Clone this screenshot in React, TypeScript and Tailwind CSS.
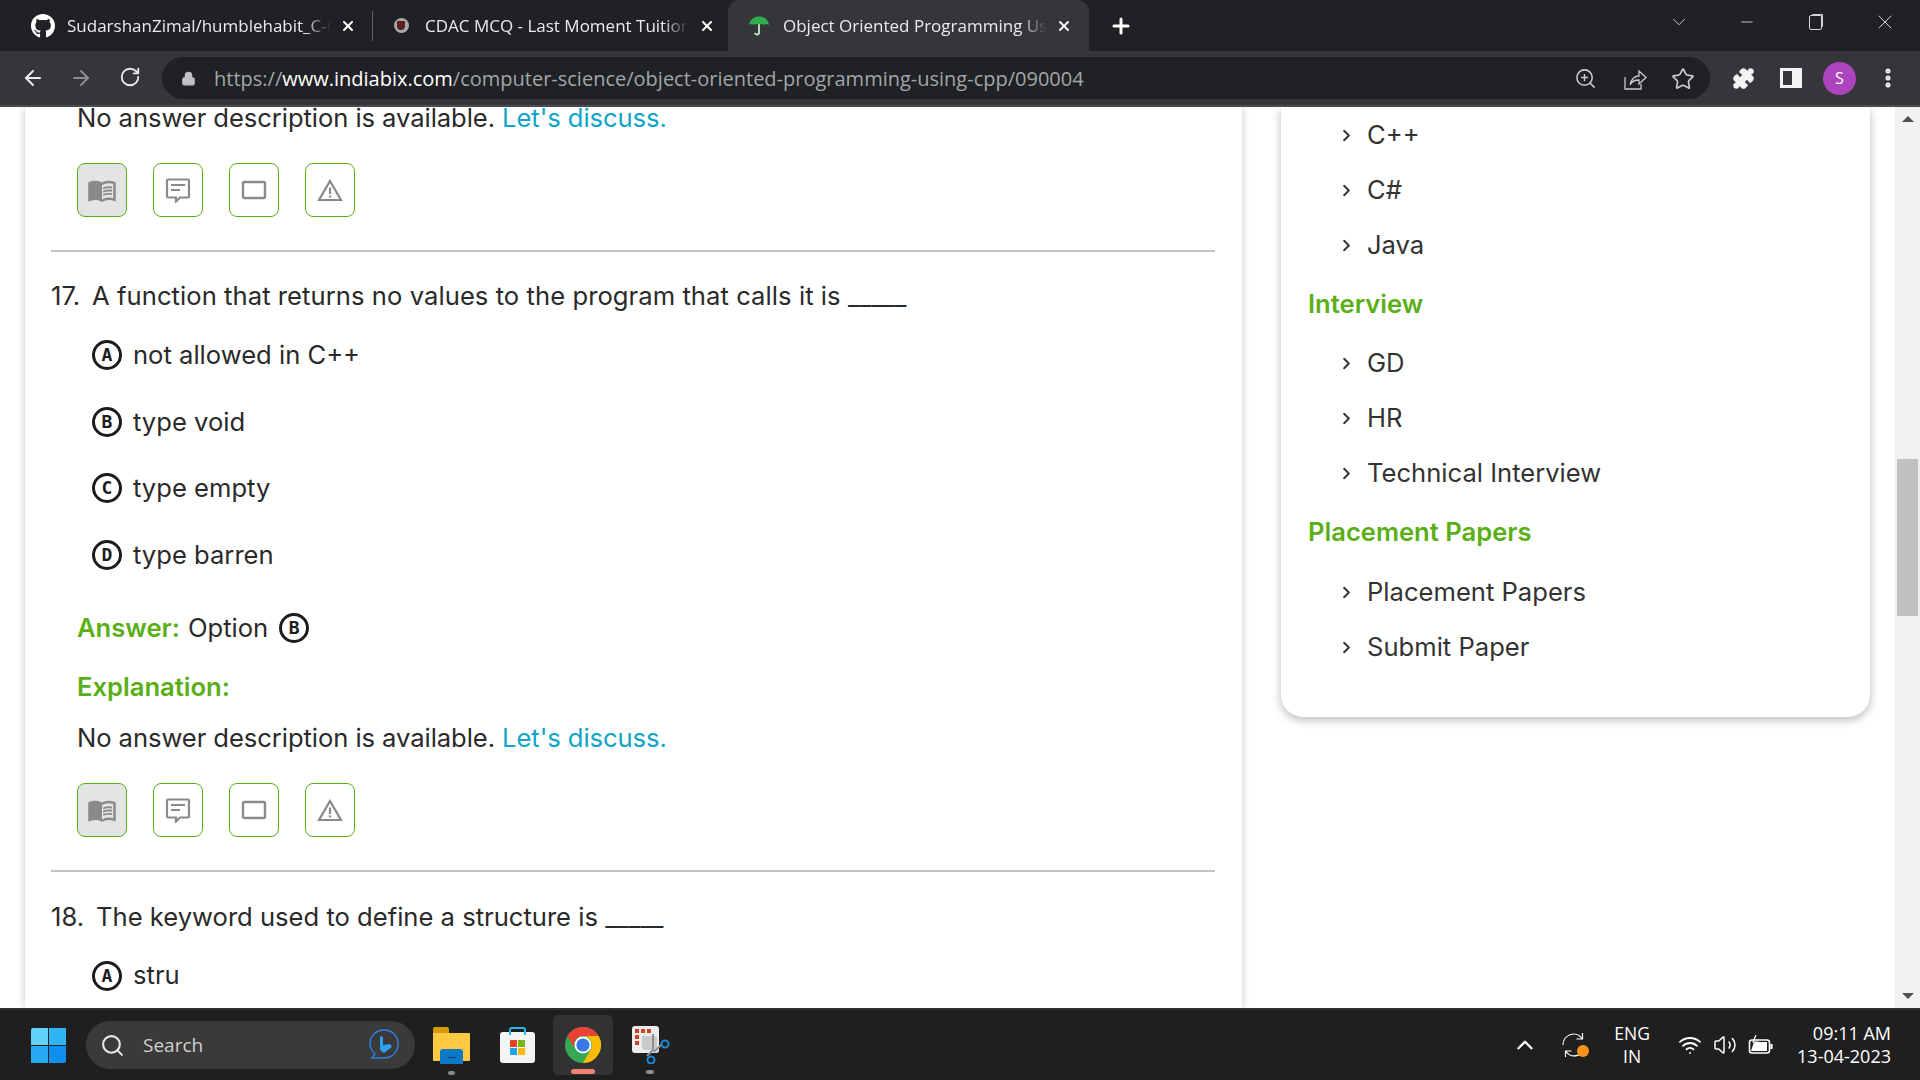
import * as React from 'react';
import { ArrowLeft, ArrowRight, RotateCw, Lock, ZoomIn, Star, Puzzle, X, Plus, ChevronDown, Minus, ChevronRight, ChevronUp, Search, Wifi, Volume2, EllipsisVertical } from 'lucide-react';
import { FaGithub } from 'react-icons/fa';
import { MdMenuBook } from 'react-icons/md';

const GREEN = 'text-[#5aaf17]';

function Letter({ children }: { children: string }) {
  return (
    <span className="w-[30px] h-[30px] shrink-0 rounded-full border-[3px] border-[#1c1c1c] flex items-center justify-center text-[18px] font-bold text-[#1c1c1c] leading-none font-['DejaVu_Sans_Mono',monospace]">
      {children}
    </span>
  );
}

function Option({ letter, text }: { letter: string; text: string }) {
  return (
    <div className="h-[66.6px] pl-[41px] flex items-center gap-[11px]">
      <Letter>{letter}</Letter>
      <span>{text}</span>
    </div>
  );
}

function ActionButtons() {
  const box = 'w-[50px] h-[54px] rounded-[8px] border border-[#5aaf17] flex items-center justify-center text-[#8a8a8a]';
  return (
    <div className="flex gap-[26px] ml-[26px]">
      <div className={box + ' bg-[#e4e4e4]'}>
        <MdMenuBook size={30} />
      </div>
      <div className={box}>
        <svg width="26" height="26" viewBox="0 0 26 26" fill="none" stroke="currentColor" strokeWidth="2.2">
          <path d="M3 2.5h20a1 1 0 0 1 1 1v16a1 1 0 0 1-1 1h-8l-4 4v-4H3a1 1 0 0 1-1-1v-16a1 1 0 0 1 1-1z" />
          <path d="M6 8h14M6 13h9" />
        </svg>
      </div>
      <div className={box}>
        <svg width="26" height="22" viewBox="0 0 26 22" fill="none" stroke="currentColor" strokeWidth="2.4">
          <rect x="2" y="3" width="22" height="16" rx="1.5" />
        </svg>
      </div>
      <div className={box}>
        <svg width="26" height="24" viewBox="0 0 26 24" fill="none" stroke="currentColor" strokeWidth="2.2">
          <path d="M13 3 24 22H2z" strokeLinejoin="miter" />
          <path d="M13 9.5v6.5M13 17.5v2" />
        </svg>
      </div>
    </div>
  );
}

function SideItem({ text }: { text: string }) {
  return (
    <div className="h-[55px] flex items-center pl-[29px] text-[#333]">
      <ChevronRight size={19} strokeWidth={2.4} className="shrink-0 text-[#333]" />
      <span className="ml-[11px]">{text}</span>
    </div>
  );
}

function SideHeading({ text, className }: { text: string; className: string }) {
  return <div className={'h-10 flex items-center font-semibold ' + GREEN + ' ' + className}>{text}</div>;
}

function Tab({ icon, title, closeClass, active }: { icon: React.ReactNode; title: string; closeClass: string; active?: boolean }) {
  return (
    <div className={'h-full flex items-center relative ' + (active ? 'w-[361px] bg-[#35363a] rounded-t-[12px]' : 'w-[358px]')}>
      <div className="w-[24px] ml-[19px] flex justify-center shrink-0">{icon}</div>
      <div className="ml-[12px] w-[264px] overflow-hidden whitespace-nowrap text-[17px] text-[#e8eaed] [mask-image:linear-gradient(to_right,black_90%,transparent)]">
        {title}
      </div>
      <X size={16} strokeWidth={3} className={'text-white absolute ' + closeClass} />
    </div>
  );
}

function Chrome() {
  return (
    <div className="h-[107px] shrink-0 font-['Open_Sans',sans-serif]">
      <div className="h-[51px] bg-[#202124] flex pl-[12px]">
        <div className="flex relative">
          <Tab icon={<FaGithub size={26} className="text-white" />} title="SudarshanZimal/humblehabit_C-C" closeClass="left-[328px]" />
          <div className="absolute left-[360px] top-[11px] w-px h-[30px] bg-[#5f6368]" />
          <Tab
            icon={
              <span className="w-[15px] h-[15px] rounded-full bg-[#a8a8a8] flex items-center justify-center">
                <span className="w-[8px] h-[9px] bg-[#5b2020] rounded-b-[4px]" />
              </span>
            }
            title="CDAC MCQ - Last Moment Tuition"
            closeClass="left-[329px]"
          />
          <Tab
            icon={
              <svg width="22" height="22" viewBox="0 0 24 24">
                <path d="M1 11C2 4 8 1.5 12 1.5S22 4 23 11c-2-1.5-4-1.5-5.5 0-1.500-1.500-3.500-1.500-5.500 0-2-1.500-4-1.500-5.500 0C5 9.500 3 9.500 1 11z" fill="#2fae4e" />
                <path d="M12 10v9c0 3-4 3-4.500 0.500" fill="none" stroke="#bfe8c8" strokeWidth="2" />
              </svg>
            }
            title="Object Oriented Programming Using"
            closeClass="left-[328px]"
            active
          />
          <Plus size={24} strokeWidth={3} className="text-white self-center ml-[20px]" />
        </div>
        <div className="ml-auto flex items-start text-[#d5d5d5]">
          <div className="w-[68px] h-[44px] flex items-center justify-center"><ChevronDown size={22} strokeWidth={1} /></div>
          <div className="w-[68px] h-[44px] flex items-center justify-center"><Minus size={18} strokeWidth={1.2} /></div>
          <div className="w-[68px] h-[44px] flex items-center justify-center">
            <span className="w-[13px] h-[15px] border border-[#d5d5d5] rounded-[2px] shadow-[2px_-2px_0_-1px_#d5d5d5]" />
          </div>
          <div className="w-[71px] h-[44px] flex items-center justify-center"><X size={24} strokeWidth={1} /></div>
        </div>
      </div>
      <div className="h-[54px] bg-[#35363a] flex items-center">
        <div className="w-[162px] flex shrink-0 text-[#e8eaed]">
          <ArrowLeft size={24} className="ml-[21px]" />
          <ArrowRight size={24} className="ml-[24px] text-[#8a8c90]" />
          <RotateCw size={22} className="ml-[26px]" />
        </div>
        <div className="w-[1548px] h-[42px] bg-[#202124] rounded-full flex items-center text-[20px] text-[#a2a5aa] pt-px">
          <Lock size={15} fill="#bdc1c6" strokeWidth={2} className="ml-[19px] text-[#bdc1c6]" />
          <span className="ml-[18px]">https://<span className="text-white">www.indiabix.com</span>/computer-science/object-oriented-programming-using-cpp/090004</span>
          <ZoomIn size={23} strokeWidth={1.6} className="ml-auto text-[#c8cacd]" />
          <svg width="24" height="24" viewBox="0 0 24 24" fill="none" stroke="#c8cacd" strokeWidth="1.3" className="ml-[26px]">
            <path d="M2 10v12h16v-5M7 18c1-6 5-9 9-9V4l7 6.500-7 6.500v-4c-4 0-7 1-9 5z" />
          </svg>
          <Star size={24} strokeWidth={1.7} className="ml-[24px] mr-[15px] text-[#c8cacd]" />
        </div>
        <Puzzle size={23} fill="#f1f3f4" strokeWidth={1.5} className="ml-[22px] text-[#f1f3f4]" />
        <div className="ml-[25px] w-[22px] h-[20px] border-[3px] border-r-[10px] border-[#f1f3f4]" />
        <div className="ml-[21px] w-[33px] h-[33px] rounded-full bg-[#ad44bd] text-white text-[16px] flex items-center justify-center">S</div>
        <EllipsisVertical size={24} strokeWidth={3} className="ml-[20px] text-[#f1f3f4]" />
      </div>
      <div className="h-[2px] bg-[#4a4b4f]" />
    </div>
  );
}

function Page() {
  return (
    <div className="flex-1 min-h-0 flex overflow-hidden bg-white font-['Inter',sans-serif] text-[25.6px] text-[#2a2a2a]">
      {/* question column */}
      <div className="w-[1217px] ml-[25px] shrink-0 shadow-[0_0_8px_rgba(0,0,0,0.22)] pl-[26px] pr-[27px]">
        <div className="h-[22px] ml-[26px] flex items-center whitespace-nowrap tracking-[-0.07px]">
          No answer description is available.&nbsp;<span className="text-[#0ea5c9]">Let's discuss.</span>
        </div>
        <div className="mt-[34px]"><ActionButtons /></div>
        <div className="mt-[33px] h-[2px] bg-[#c4c4c4]" />
        <div className="mt-[24px] h-10 flex items-center">
          <span className="w-[41px] shrink-0">17.</span>
          <span className="tracking-[0.06px]">A function that returns no values to the program that calls it is _____</span>
        </div>
        <div className="mt-[6px]">
          <Option letter="A" text="not allowed in C++" />
          <Option letter="B" text="type void" />
          <Option letter="C" text="type empty" />
          <Option letter="D" text="type barren" />
        </div>
        <div className="mt-[20px] h-10 ml-[26px] flex items-center">
          <span className={'font-semibold ' + GREEN}>Answer:</span>
          <span className="ml-[8px]">Option</span>
          <span className="ml-[11px]"><Letter>B</Letter></span>
        </div>
        <div className={'mt-[19px] h-10 ml-[26px] flex items-center font-semibold ' + GREEN}>Explanation:</div>
        <div className="mt-[11px] h-10 ml-[26px] flex items-center whitespace-nowrap tracking-[-0.07px]">
          No answer description is available.&nbsp;<span className="text-[#0ea5c9]">Let's discuss.</span>
        </div>
        <div className="mt-[25px]"><ActionButtons /></div>
        <div className="mt-[33px] h-[2px] bg-[#c4c4c4]" />
        <div className="mt-[25px] h-10 flex items-center">
          <span className="w-[45px] shrink-0">18.</span>
          <span>The keyword used to define a structure is _____</span>
        </div>
        <div className="mt-[5px]"><Option letter="A" text="stru" /></div>
      </div>

      {/* sidebar */}
      <div className="w-[589px] ml-[39px] shrink-0 self-start bg-white rounded-b-[22px] shadow-[0_3px_10px_rgba(0,0,0,0.28)] pl-[27px] pt-px pb-[42px]">
        <SideItem text="C++" />
        <SideItem text="C#" />
        <SideItem text="Java" />
        <SideHeading text="Interview" className="mt-[11px] mb-[12px]" />
        <SideItem text="GD" />
        <SideItem text="HR" />
        <SideItem text="Technical Interview" />
        <SideHeading text="Placement Papers" className="mt-[11px] mb-[13px]" />
        <SideItem text="Placement Papers" />
        <SideItem text="Submit Paper" />
      </div>

      {/* scrollbar */}
      <div className="ml-auto w-[25px] bg-[#f1f1f1] flex flex-col items-center py-[9px]">
        <span className="w-0 h-0 border-x-[6px] border-x-transparent border-b-[6px] border-b-[#505050]" />
        <span className="mt-[337px] w-[21px] h-[157px] bg-[#c1c1c1]" />
        <span className="mt-auto w-0 h-0 border-x-[6px] border-x-transparent border-t-[6px] border-t-[#505050]" />
      </div>
    </div>
  );
}

function Taskbar() {
  return (
    <div className="h-[72px] shrink-0 bg-[#1f1f1f] border-t-2 border-[#2e2e2e] flex items-center text-white font-['Open_Sans',sans-serif]">
      <div className="ml-[31px] w-[35px] h-[35px] grid grid-cols-2 gap-[1px] shrink-0">
        <span className="bg-[#5fd3fb] rounded-tl-[2px]" />
        <span className="bg-[#2fb5f5]" />
        <span className="bg-[#26a8f3]" />
        <span className="bg-[#0f8ff0] rounded-br-[2px]" />
      </div>
      <div className="ml-[20px] w-[329px] h-[48px] rounded-full bg-[#3a3a3a] flex items-center text-[#d0d0d0] text-[19px] shrink-0">
        <Search size={25} strokeWidth={2} className="ml-[14px] text-[#e8e8e8]" />
        <span className="ml-[18px]">Search</span>
        <svg width="30" height="32" viewBox="0 0 30 32" fill="none" className="ml-auto mr-[16px]">
          <path d="M3 29l3-4C3 22 1 19 1 15 1 7 7 1 15 1s14 6 14 14-6 14-14 14z" stroke="#2f7fe0" strokeWidth="1.4" />
          <path d="M11 7l3 1v8l7-1 2 3-8 6-4-3z" fill="#2ea0f0" />
        </svg>
      </div>

      <div className="ml-[18px] w-[37px] h-[37px] relative shrink-0">
        <span className="block w-[16px] h-[8px] bg-[#d99a0a] rounded-t-[2px]" />
        <span className="block w-[37px] h-[28px] -mt-[2px] bg-[#fdc940] rounded-[1px]" />
        <span className="absolute left-[7px] bottom-0 w-[23px] h-[15px] bg-[#0c78c8] rounded-t-[3px]" />
        <span className="absolute left-[15px] top-[30px] w-[8px] h-px bg-[#063f6e]" />
        <span className="absolute left-[15px] top-[44px] w-[7px] h-[4px] rounded-full bg-[#8a8a8a]" />
      </div>

      <div className="ml-[30px] w-[35px] h-[31px] relative shrink-0 bg-[#f4f4f4] rounded-[3px] mt-[5px]">
        <span className="absolute left-[9px] -top-[5px] w-[17px] h-[8px] border-2 border-b-0 border-[#29b6e8] rounded-t-[3px]" />
        <div className="absolute left-[10px] top-[8px] w-[15px] h-[15px] grid grid-cols-2 gap-px">
          <span className="bg-[#e8431f]" />
          <span className="bg-[#7cb518]" />
          <span className="bg-[#1fa2e8]" />
          <span className="bg-[#fbb90a]" />
        </div>
      </div>

      <div className="ml-[18px] w-[60px] h-[60px] bg-[#323232] rounded-[5px] flex items-center justify-center relative shrink-0">
        <svg width="36" height="36" viewBox="0 0 36 36">
          <circle cx="18" cy="18" r="18" fill="#34a853" />
          <path d="M2.400 9A18 18 0 0 1 33.600 9H18a9 9 0 0 0-7.800 13.500z" fill="#ea4335" />
          <path d="M33.600 9A18 18 0 0 1 18 36l7.800-13.500A9 9 0 0 0 18 9z" fill="#fbbc05" />
          <circle cx="18" cy="18" r="8.500" fill="#fff" />
          <circle cx="18" cy="18" r="6.600" fill="#3b78e7" />
        </svg>
        <span className="absolute bottom-[1px] left-[18px] w-[24px] h-[5px] rounded-full bg-[#f28371]" />
      </div>

      <div className="ml-[19px] w-[38px] h-[38px] relative shrink-0">
        <svg width="38" height="38" viewBox="0 0 38 38" fill="none">
          <rect x="0" y="0" width="27" height="27" rx="3" fill="#ececec" />
          <path d="M3 3h4v4H3zM9 3h4v4H9zM15 3h4v4h-4zM3 9h4v4H3zM3 15h4v4H3z" fill="#d0401f" />
          <path d="M10 10h12a3 3 0 0 1 3 3v11H13a3 3 0 0 1-3-3z" fill="#c9c9c9" />
          <path d="M21 8v16l-6 6M30 18l-8 8" stroke="#8f8f8f" strokeWidth="2" />
          <circle cx="33" cy="18" r="3.500" stroke="#1e88d8" strokeWidth="2" />
          <circle cx="19" cy="34" r="3.500" stroke="#1e88d8" strokeWidth="2" />
        </svg>
        <span className="absolute left-[14px] top-[44px] w-[8px] h-[4px] rounded-full bg-[#8a8a8a]" />
      </div>

      <div className="ml-auto flex items-center shrink-0">
        <ChevronUp size={26} strokeWidth={2.2} />
        <div className="ml-[23px] w-[26px] h-[26px] relative">
          <svg width="26" height="26" viewBox="0 0 26 26" fill="none" stroke="#fff" strokeWidth="1.200">
            <path d="M2 13A10.500 10.500 0 0 1 21 6.500M21.500 1v6h-6" />
            <path d="M24 14A10.500 10.500 0 0 1 5 19.500M4.500 25v-6h6" />
          </svg>
          <span className="absolute right-[-2px] bottom-[1px] w-[12px] h-[12px] rounded-full bg-[#f7941d]" />
        </div>
        <div className="ml-[12px] w-[66px] text-center text-[17.5px] leading-[23px]">
          <div>ENG</div>
          <div>IN</div>
        </div>
        <Wifi size={24} strokeWidth={1.8} className="ml-[13px]" />
        <Volume2 size={24} strokeWidth={1.5} className="ml-[11px]" />
        <svg width="26" height="22" viewBox="0 0 26 22" fill="none" stroke="#fff" strokeWidth="1.600" className="ml-[11px]">
          <rect x="1.500" y="6" width="20" height="13" rx="2.500" />
          <path d="M23.500 10v5" strokeWidth="2.200" />
          <path d="M6 8h13v9H3z" fill="#fff" stroke="none" />
          <path d="M8 1 5 8h5l-3 7" stroke="#fff" strokeWidth="1.200" />
        </svg>
        <div className="ml-[23px] mr-[29px] text-right text-[18px] leading-[23px] whitespace-nowrap">
          <div>09:11 AM</div>
          <div>13-04-2023</div>
        </div>
      </div>
    </div>
  );
}

export default function App() {
  return (
    <div className="w-[1920px] h-[1080px] flex flex-col overflow-hidden">
      <Chrome />
      <Page />
      <Taskbar />
    </div>
  );
}
